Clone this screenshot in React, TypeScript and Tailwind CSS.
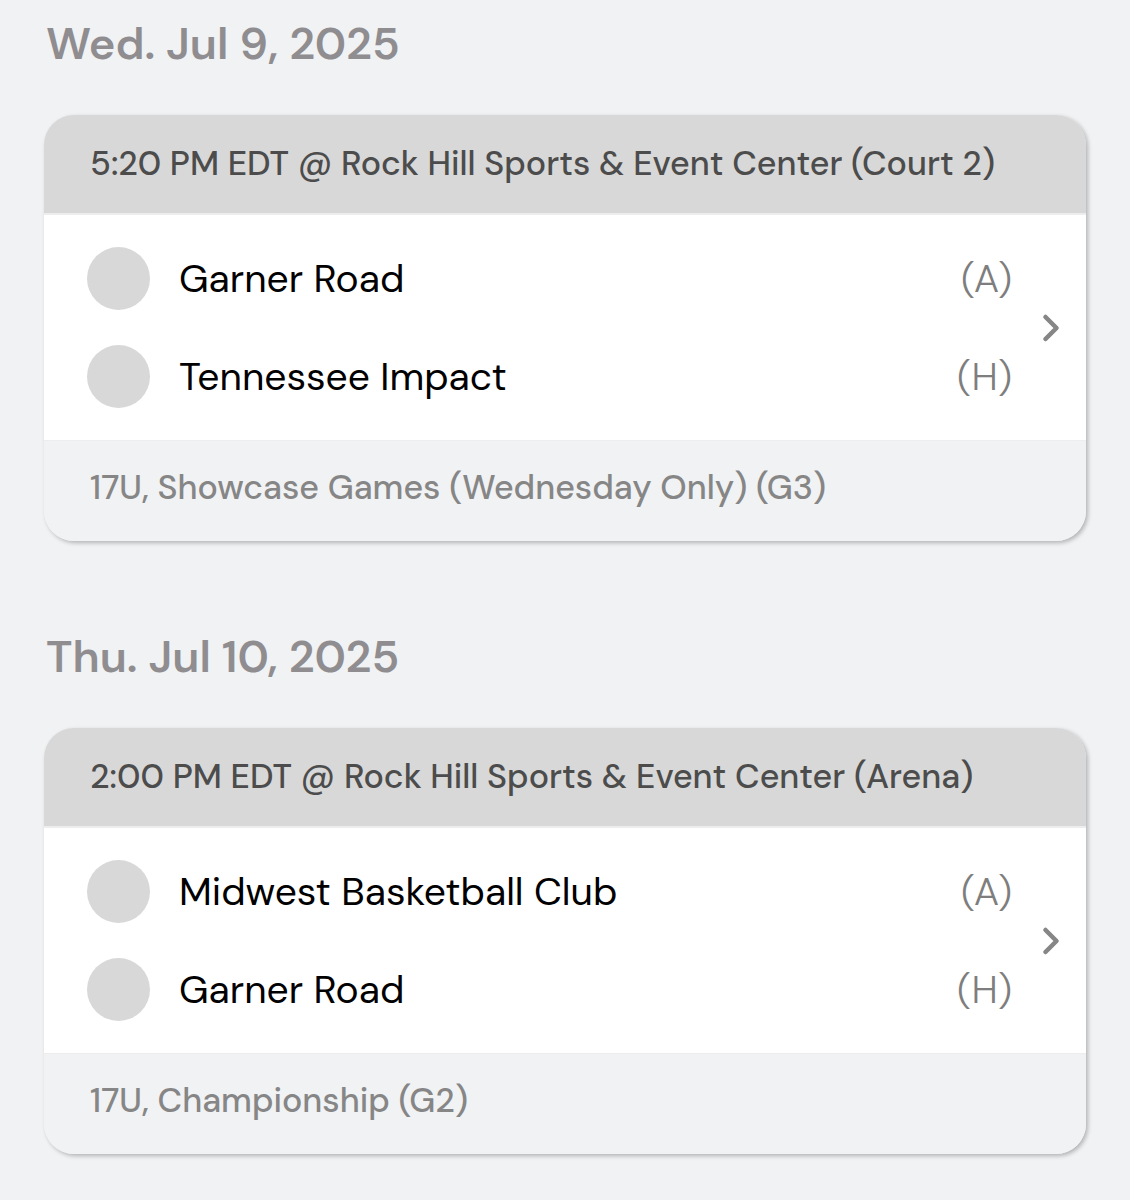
import { ChevronRight } from 'lucide-react';

const days = [
  {
    date: 'Wed. Jul 9, 2025',
    venue: '5:20 PM EDT @ Rock Hill Sports & Event Center (Court 2)',
    away: 'Garner Road',
    home: 'Tennessee Impact',
    division: '17U, Showcase Games (Wednesday Only) (G3)',
  },
  {
    date: 'Thu. Jul 10, 2025',
    venue: '2:00 PM EDT @ Rock Hill Sports & Event Center (Arena)',
    away: 'Midwest Basketball Club',
    home: 'Garner Road',
    division: '17U, Championship (G2)',
  },
];

function Team({ name, side }: { name: string; side: string }) {
  return (
    <div className="flex items-center text-[39px] leading-[62px]">
      <span className="size-[63px] shrink-0 rounded-full bg-[#d8d8d8]" />
      <span className="ml-[29px] flex-1 text-black">{name}</span>
      <span className="font-light text-[#7e7e7e]">({side})</span>
    </div>
  );
}

export default function App() {
  return (
    <main className="min-h-screen bg-[#f1f2f4] px-11 pt-[15px] pb-11 font-['DM_Sans','Lato',sans-serif]">
      {days.map((day) => (
        <section key={day.date} className="mb-[87px] last:mb-0">
          <h2 className="mb-[42px] pl-[2px] text-[45px] leading-[58px] font-semibold text-[#8f8d90]">
            {day.date}
          </h2>
          <a
            href="#"
            className="block overflow-hidden rounded-[30px] shadow-[2px_2px_4px_rgba(0,0,0,0.26)]"
          >
            <div className="bg-[#d8d8d8] pl-[46px] text-[34px] leading-[98px] font-medium text-[#4c4c4c]">
              {day.venue}
            </div>
            <div className="flex items-center border-t-2 border-[#ededee] bg-white py-8 pr-[13px] pl-[43px]">
              <div className="flex flex-1 flex-col gap-[35px]">
                <Team name={day.away} side="A" />
                <Team name={day.home} side="H" />
              </div>
              <ChevronRight className="ml-[17px] size-11 text-[#868686]" strokeWidth={2.5} />
            </div>
            <div className="border-t border-[#ededee] bg-[#f1f2f4] pb-[6px] pl-[46px] text-[34px] leading-[94px] font-medium text-[#868686]">
              {day.division}
            </div>
          </a>
        </section>
      ))}
    </main>
  );
}
